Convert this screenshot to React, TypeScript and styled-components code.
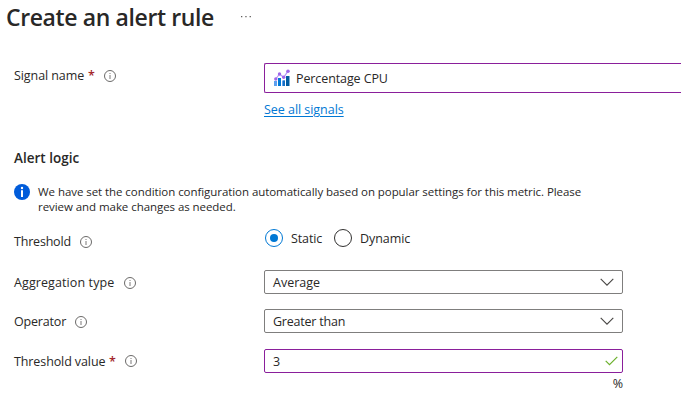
import React from "react";
import styled, { createGlobalStyle } from "styled-components";

const GlobalStyle = createGlobalStyle`
  * { box-sizing: border-box; }
  body {
    margin: 0;
    background: #fff;
    color: #292827;
    font-family: "Open Sans", "Noto Sans", sans-serif;
    font-size: 12.5px;
    overflow: hidden;
  }
`;

const Page = styled.main`
  width: 681px;
  height: 414px;
  overflow: hidden;
`;

const Header = styled.header`
  display: flex;
  align-items: center;
  height: 34px;
  padding-left: 6px;
`;

const Title = styled.h1`
  margin: 0;
  width: 234px;
  font-size: 23px;
  font-weight: 600;
  letter-spacing: -0.38px;
  line-height: 34px;
  white-space: nowrap;
`;

const Row = styled.div<{ $top: number; $height: number }>`
  display: grid;
  grid-template-columns: 250px 1fr;
  height: ${(p) => p.$height}px;
  margin-top: ${(p) => p.$top}px;
  padding-left: 14px;
`;

const Label = styled.div<{ $shift?: number; $iconTop?: number }>`
  display: flex;
  align-items: center;
  height: 24px;
  margin-top: ${(p) => p.$shift ?? 0}px;
  white-space: nowrap;

  svg {
    margin-left: 9px;
    margin-top: ${(p) => p.$iconTop ?? 1}px;
  }
`;

const Text = styled.span<{ $w?: number; $ls?: number }>`
  display: inline-block;
  flex: none;
  width: ${(p) => (p.$w ? `${p.$w}px` : "auto")};
  padding-top: 2px;
  letter-spacing: ${(p) => p.$ls ?? 0}px;
  line-height: 18px;
  white-space: nowrap;
`;

const Required = styled.span`
  margin-left: 4px;
  width: 7px;
  padding-top: 2px;
  color: #a4262c;
  font-weight: 600;
  line-height: 18px;
`;

const SignalField = styled.div`
  display: flex;
  align-items: center;
  height: 30px;
  padding-left: 9px;
  border: 1px solid #8a1f9b;
  border-right: 0;
  border-radius: 2px 0 0 2px;

  svg { margin-right: 6px; }
`;

const Field = styled.div<{ $edited?: boolean }>`
  display: flex;
  align-items: center;
  justify-content: space-between;
  width: 359px;
  height: 24px;
  padding: 0 ${(p) => (p.$edited ? 4 : 8)}px 0 8px;
  border: 1px solid ${(p) => (p.$edited ? "#8a1f9b" : "#7f7e7d")};
  border-radius: 2px;
`;

const LinkLine = styled.div`
  height: 18px;
  margin: 8px 0 0 264px;
`;

const Link = styled.a`
  color: #0078d4;
  text-decoration: underline;
  text-underline-offset: 2px;
  text-decoration-thickness: 1px;
  letter-spacing: -0.04px;
  line-height: 18px;
`;

const SectionTitle = styled.h2`
  margin: 29px 0 0 14px;
  height: 20px;
  font-size: 13.5px;
  font-weight: 600;
  line-height: 20px;
`;

const Notice = styled.div`
  display: flex;
  height: 32px;
  margin: 16px 0 0 14px;
`;

const NoticeText = styled.p`
  display: flex;
  flex-direction: column;
  margin: 0 0 0 8px;
  font-size: 11.5px;
`;

const NoticeLine = styled.span`
  letter-spacing: -0.06px;
  line-height: 15px;
  white-space: nowrap;
`;

const RadioGroup = styled.div`
  display: flex;
  align-items: center;
  height: 20px;
`;

const Radio = styled.span<{ $on?: boolean }>`
  display: grid;
  place-items: center;
  width: 18px;
  height: 18px;
  margin-left: 1px;
  margin-right: 8px;
  border: 1px solid ${(p) => (p.$on ? "#0078d4" : "#323130")};
  border-radius: 50%;

  &::after {
    content: "";
    width: 8px;
    height: 8px;
    border-radius: 50%;
    background: ${(p) => (p.$on ? "#0078d4" : "transparent")};
  }
`;

const Unit = styled.div`
  width: 623px;
  height: 18px;
  margin-top: 2px;
  text-align: right;
  line-height: 18px;
`;

const InfoIcon = () => (
  <svg width="12" height="12" viewBox="0 0 12 12" fill="none">
    <circle cx="6" cy="6" r="5.5" stroke="#6b6a69" />
    <path d="M6 5v4" stroke="#7a7978" />
    <path d="M6 3v1" stroke="#7a7978" />
  </svg>
);

const NoticeIcon = () => (
  <svg width="16" height="16" viewBox="0 0 16 16">
    <circle cx="8" cy="8" r="8" fill="#015cda" />
    <circle cx="8" cy="4" r="1.2" fill="#fff" />
    <path d="M7 6.3h2V13H7z" fill="#fff" />
  </svg>
);

const MetricIcon = () => (
  <svg width="16" height="18" viewBox="0 0 16 18">
    <path d="M0 12h3v5H0z" fill="#5ea0ef" />
    <path d="M4 9h3v8H4z" fill="#0078d4" />
    <path d="M8 11.500h3V17H8z" fill="#5ea0ef" />
    <path d="M9 11.500h2V17H9z" fill="#156fc4" />
    <path d="M12 7h3.500v10H12z" fill="#005ba1" />
    <path d="M1.800 10L5.500 5l4.200 3.300L14 2.200" fill="none" stroke="#b796f9" strokeWidth="1.200" />
    <g fill="#a067e8">
      <circle cx="1.800" cy="10" r="1.700" />
      <circle cx="5.500" cy="5" r="1.700" />
      <circle cx="9.700" cy="8.300" r="1.700" />
      <circle cx="14" cy="2.200" r="1.800" />
    </g>
  </svg>
);

const Chevron = () => (
  <svg width="14" height="8" viewBox="0 0 14 8" fill="none">
    <path d="M.7.8L7 7.100 13.300.8" stroke="#484644" strokeWidth="1.100" />
  </svg>
);

const Check = () => (
  <svg width="13" height="10" viewBox="0 0 13 10" fill="none">
    <path d="M.7 4.800l3.800 3.800L12.300.9" stroke="#6bb02c" strokeWidth="1.200" />
  </svg>
);

const Dots = () => (
  <svg width="12" height="4" viewBox="0 0 12 4" fill="#605e5c">
    <path d="M1 1h1.300v1.300H1zM5.300 1h1.300v1.300H5.300zM9.600 1h1.300v1.300H9.600z" />
  </svg>
);

export default function App() {
  return (
    <Page>
      <GlobalStyle />
      <Header>
        <Title>Create an alert rule</Title>
        <Dots />
      </Header>
      <Row $top={29} $height={30}>
        <Label><Text $w={70} $ls={-0.08}>Signal name</Text><Required>*</Required><InfoIcon /></Label>
        <SignalField><MetricIcon /><Text $ls={-0.1}>Percentage CPU</Text></SignalField>
      </Row>
      <LinkLine><Link>See all signals</Link></LinkLine>
      <SectionTitle>Alert logic</SectionTitle>
      <Notice>
        <NoticeIcon />
        <NoticeText>
          <NoticeLine>We have set the condition configuration automatically based on popular settings for this metric. Please</NoticeLine>
          <NoticeLine>review and make changes as needed.</NoticeLine>
        </NoticeText>
      </Notice>
      <Row $top={12} $height={20}>
        <Label $shift={1}><Text $w={57} $ls={-0.2}>Threshold</Text><InfoIcon /></Label>
        <RadioGroup>
          <Radio $on /><Text $w={42} $ls={-0.1}>Static</Text>
          <Radio /><Text $ls={-0.05}>Dynamic</Text>
        </RadioGroup>
      </Row>
      <Row $top={22} $height={24}>
        <Label><Text $w={101} $ls={0.1}>Aggregation type</Text><InfoIcon /></Label>
        <Field><Text>Average</Text><Chevron /></Field>
      </Row>
      <Row $top={15} $height={24}>
        <Label><Text $w={52} $ls={-0.18}>Operator</Text><InfoIcon /></Label>
        <Field><Text $ls={-0.22}>Greater than</Text><Chevron /></Field>
      </Row>
      <Row $top={16} $height={24}>
        <Label $iconTop={-1}><Text $w={91} $ls={-0.1}>Threshold value</Text><Required>*</Required><InfoIcon /></Label>
        <Field $edited><Text>3</Text><Check /></Field>
      </Row>
      <Unit>%</Unit>
    </Page>
  );
}
